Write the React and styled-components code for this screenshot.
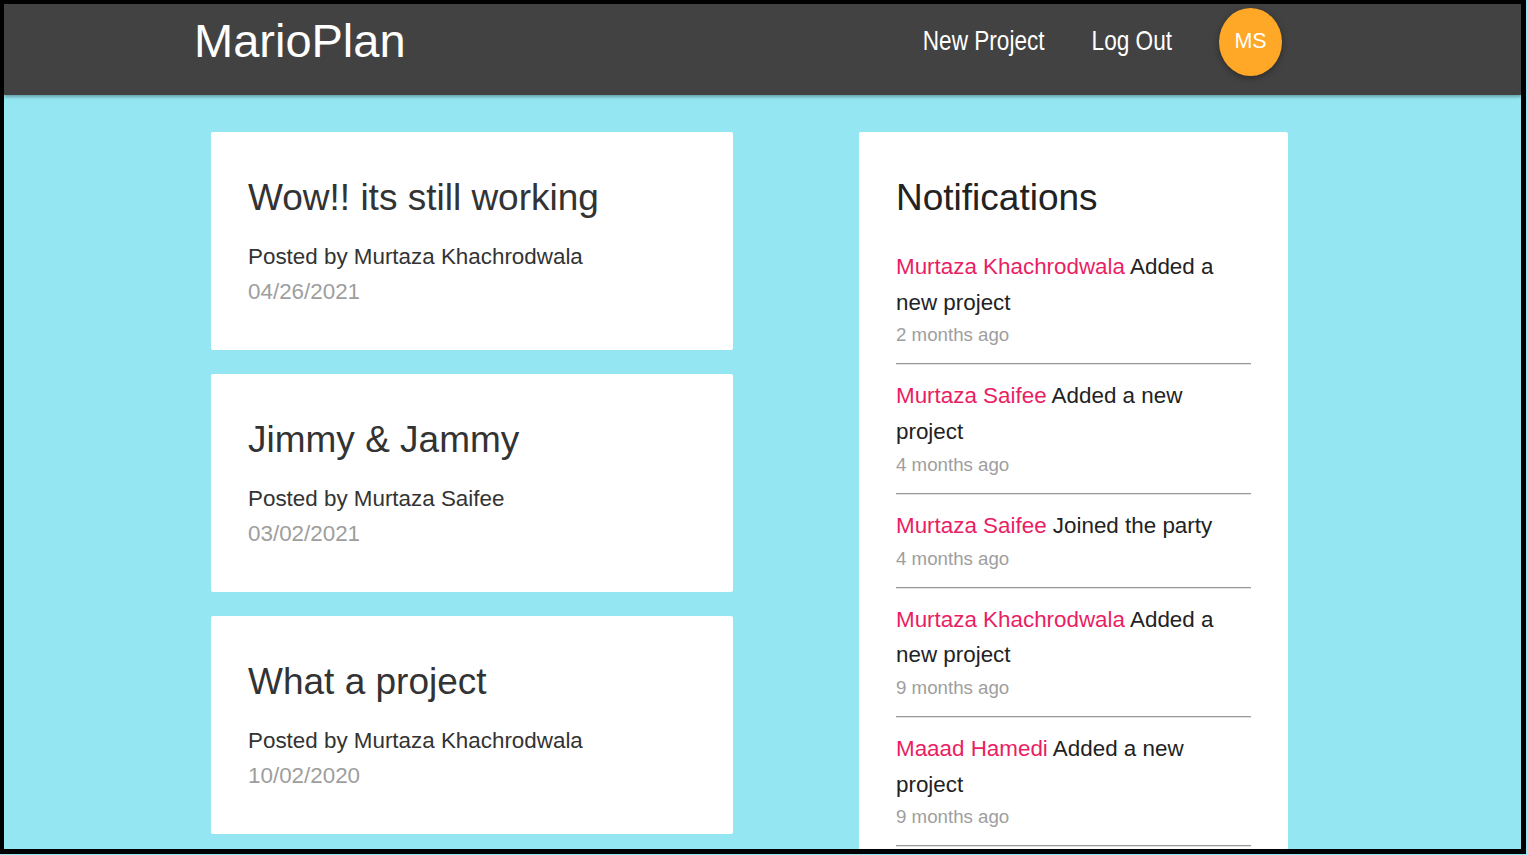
import React from "react";
import styled, { createGlobalStyle } from "styled-components";

const cyan = "#94e7f2";
const pink = "#e91e63";
const grey = "#9e9e9e";

const GlobalStyle = createGlobalStyle`
    html, body {
        margin: 0;
        padding: 0;
        background: ${cyan};
    }
    * {
        box-sizing: border-box;
    }
`;

const Frame = styled.div`
    width: 1526px;
    height: 854px;
    border-style: solid;
    border-color: #000;
    border-width: 4px 5px 5px 4px;
    background: ${cyan};
    overflow: hidden;
    font-family: "Liberation Sans", Arial, sans-serif;
`;

const NavBar = styled.nav`
    position: relative;
    z-index: 2;
    height: 91px;
    background: #424242;
    box-shadow: 0 2px 3px rgba(0, 0, 0, 0.3);
    display: flex;
    align-items: center;
    justify-content: space-between;
    padding: 0 239px 16px 190px;
`;

const Brand = styled.a`
    color: #fff;
    font-size: 47px;
    text-decoration: none;
    margin-bottom: 3px;
`;

const NavLinks = styled.ul`
    display: flex;
    align-items: center;
    gap: 47px;
    margin: 0;
    padding: 0;
    list-style: none;
`;

const NavLink = styled.a`
    display: inline-block;
    color: #fff;
    font-size: 22.6px;
    text-decoration: none;
    transform: scaleY(1.2);
`;

const Avatar = styled.a`
    display: flex;
    align-items: center;
    justify-content: center;
    width: 63px;
    height: 68px;
    border-radius: 50%;
    background: #ffa726;
    color: #fff;
    font-size: 21.5px;
    text-decoration: none;
    box-shadow: 0 2px 6px rgba(0, 0, 0, 0.35);
`;

const Main = styled.main`
    display: grid;
    grid-template-columns: 522px 429px;
    column-gap: 126px;
    align-items: start;
    padding: 37px 0 0 207px;
`;

const Column = styled.div`
    display: flex;
    flex-direction: column;
    gap: 24px;
`;

const Card = styled.div`
    background: #fff;
    border-radius: 2px;
    padding: 42px 37px 41px;
`;

const CardTitle = styled.h2`
    margin: 0 0 ${props => props.gap}px;
    font-size: 37px;
    font-weight: 400;
    line-height: 48px;
    color: ${props => props.dark ? "#222" : "#333"};
`;

const Line = styled.p`
    margin: 0;
    font-size: 22.4px;
    line-height: 35px;
    color: ${props => props.muted ? grey : "#333"};
`;

const NoteList = styled.ul`
    margin: 0;
    padding: 0;
    list-style: none;
`;

const NoteItem = styled.li`
    padding: 14px 0;
    border-bottom: 1px solid #999;
    box-shadow: 0 1px 0 #e2e2e2;
`;

const NoteText = styled.div`
    font-size: 22.4px;
    line-height: 35.7px;
    color: #222;
`;

const Who = styled.span`
    color: ${pink};
`;

const When = styled.div`
    font-size: 18.7px;
    line-height: 29px;
    color: ${grey};
`;

const projects = [
    { id: 1, title: "Wow!! its still working", author: "Murtaza Khachrodwala", date: "04/26/2021" },
    { id: 2, title: "Jimmy & Jammy", author: "Murtaza Saifee", date: "03/02/2021" },
    { id: 3, title: "What a project", author: "Murtaza Khachrodwala", date: "10/02/2020" }
];

const notifications = [
    { user: "Murtaza Khachrodwala", content: "Added a new project", time: "2 months ago" },
    { user: "Murtaza Saifee", content: "Added a new project", time: "4 months ago" },
    { user: "Murtaza Saifee", content: "Joined the party", time: "4 months ago" },
    { user: "Murtaza Khachrodwala", content: "Added a new project", time: "9 months ago" },
    { user: "Maaad Hamedi", content: "Added a new project", time: "9 months ago" }
];

export default function App() {
    return (
        <>
            <GlobalStyle />
            <Frame>
                <NavBar>
                    <Brand href="#">MarioPlan</Brand>
                    <NavLinks>
                        <li><NavLink href="#">New Project</NavLink></li>
                        <li><NavLink href="#">Log Out</NavLink></li>
                        <li><Avatar href="#">MS</Avatar></li>
                    </NavLinks>
                </NavBar>
                <Main>
                    <Column>
                        {projects.map(p => (
                            <Card key={p.id}>
                                <CardTitle gap={17}>{p.title}</CardTitle>
                                <Line>Posted by {p.author}</Line>
                                <Line muted>{p.date}</Line>
                            </Card>
                        ))}
                    </Column>
                    <Card>
                        <CardTitle dark gap={13}>Notifications</CardTitle>
                        <NoteList>
                            {notifications.map((n, i) => (
                                <NoteItem key={`note-${i}`}>
                                    <NoteText>
                                        <Who>{n.user}</Who> {n.content}
                                    </NoteText>
                                    <When>{n.time}</When>
                                </NoteItem>
                            ))}
                        </NoteList>
                    </Card>
                </Main>
            </Frame>
        </>
    );
}
